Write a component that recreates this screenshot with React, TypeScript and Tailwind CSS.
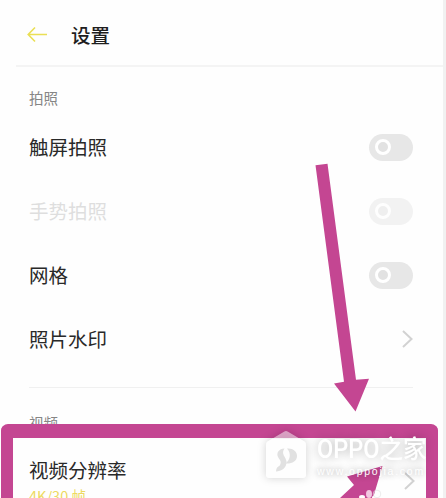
import React from 'react';
import clsx from 'clsx';

interface SettingRow {
  label: string;
  kind: 'toggle' | 'link';
  disabled?: boolean;
}

const photoSettings: SettingRow[] = [
  { label: '触屏拍照', kind: 'toggle' },
  { label: '手势拍照', kind: 'toggle', disabled: true },
  { label: '网格', kind: 'toggle' },
  { label: '照片水印', kind: 'link' },
];

const BackIcon = () => (
  <svg width="21" height="17" viewBox="0 0 21 17" fill="none" stroke="#eadf55" strokeWidth="1.6">
    <path d="M8 1.5 L1.2 8.5 L8 15.5 M1.2 8.5 H20" />
  </svg>
);

const ChevronIcon = () => (
  <svg width="12" height="18" viewBox="0 0 12 18" fill="none" stroke="#d2d2d2" strokeWidth="2">
    <path d="M2 1 L10.5 9 L2 17" />
  </svg>
);

const Toggle: React.FC<{ disabled?: boolean }> = ({ disabled }) => (
  <div className={clsx('flex h-[27px] w-[44px] items-center rounded-full bg-[#e7e7e7] pl-[6px]', disabled && 'opacity-50')}>
    <div className="h-4 w-4 rounded-full border-[3px] border-white bg-[#e2e2e2]" />
  </div>
);

const Row: React.FC<{ row: SettingRow }> = ({ row }) => (
  <div className="flex h-16 items-center justify-between">
    <span className={clsx('text-[19.5px]', row.disabled ? 'text-[#dedede]' : 'text-[#292929]')}>{row.label}</span>
    {row.kind === 'toggle' ? <Toggle disabled={row.disabled} /> : <ChevronIcon />}
  </div>
);

const PointerArrow = () => (
  <svg className="absolute left-[310px] top-[160px]" width="64" height="256" viewBox="310 160 64 256">
    <polygon points="315.5,165.2 327.5,163.8 356,379.8 369,378.8 355.5,411.5 334,383.5 344,381.8" fill="#c44692" />
  </svg>
);

const CornerArrow = () => (
  <svg className="absolute left-[327px] top-[26px]" width="52" height="34" viewBox="339 464 52 34">
    <polygon points="382.5,466 347,476.5 354,485 340,498 373,498" fill="#c44692" />
    <g fill="#fff">
      <ellipse cx="369" cy="494" rx="3" ry="4" fill="#f2c8e1" />
      <ellipse cx="362" cy="497" rx="3" ry="2" />
      <ellipse cx="375" cy="497.5" rx="3" ry="2" />
    </g>
    <circle cx="377" cy="494" r="3.8" fill="none" stroke="#e4e4e4" strokeWidth="0.7" />
  </svg>
);

const Watermark = () => (
  <div className="absolute left-[262px] top-[428px] flex">
    <svg className="overflow-visible" width="48" height="54" viewBox="262 428 48 54">
      <path
        d="M284 431.7 Q286 430.5 288 431.7 L304.5 441.5 Q306 442.5 306 444.5 V475 Q306 478 303 478 H269 Q266 478 266 475 V444.5 Q266 442.5 267.5 441.5Z"
        fill="#fff"
        fillOpacity="0.5"
        className="drop-shadow-[0_0_4px_rgba(0,0,0,0.35)]"
      />
      <path d="M272.5 438.5 H299.5 L304.5 441.5 Q306 442.5 306 444.5 V475 Q306 478 303 478 H269 Q266 478 266 475 V444.5 Q266 442.5 267.5 441.5Z" fill="#fefefe" />
      <path d="M284.5 448.5 C279 448.5 276 453 278 457 C279.5 460 282 461 280 465 C279 467 276.5 466 276 471.5 C281 471.5 287 468 286.5 461.5 C286 457 280.5 454 284.5 448.5Z" fill="#e1e1e1" />
      <path d="M287 448.5 C293 448 297 451.5 297 456 C297 461 292 464 285.5 463.5 C291 459 291 453 287 448.5Z" fill="#e1e1e1" />
    </svg>
    <div className="flex flex-col pl-[7px] pt-2 text-white">
      <span className="origin-left scale-x-[0.98] scale-y-[1.06] whitespace-nowrap font-['Roboto','Noto_Sans_CJK_SC',sans-serif] text-[24px] font-medium leading-[28px] [text-shadow:0_0_10px_rgba(0,0,0,0.32)]">
        OPPO之家
      </span>
      <span className="whitespace-nowrap font-['Liberation_Sans',sans-serif] text-[10.5px] leading-[15px] tracking-[1.75px] [text-shadow:0_0_6px_rgba(0,0,0,0.45)]">
        www.oppojia.com
      </span>
    </div>
  </div>
);

const App: React.FC = () => {
  return (
    <div className="relative h-[498px] w-[446px] overflow-hidden border-r-[3px] border-[#f1f1f1] bg-[#fefefe] font-['Noto_Sans_CJK_SC',sans-serif]">
      <header className="ml-4 flex h-[67px] items-center gap-[23px] border-b-2 border-[#f4f4f4] pl-[11px] pt-1">
        <BackIcon />
        <h1 className="text-[19.5px] font-medium text-[#1e1e1e]">设置</h1>
      </header>

      <main className="pl-[29px] pr-[30px]">
        <h2 className="mt-[21px] text-[14.5px] leading-5 text-[#858585]">拍照</h2>
        <div className="mt-[7px]">
          {photoSettings.map(row => (
            <Row key={row.label} row={row} />
          ))}
        </div>
        <div className="mt-4 border-t border-[#f0f0f0]" />
        <h2 className="mt-[25px] text-[14.5px] leading-5 text-[#858585]">视频</h2>
      </main>

      {/* Highlighted video resolution entry */}
      <section className="absolute left-px top-[424px] h-[90px] w-[437px] rounded-[7px] border-x-[12px] border-t-[14px] border-[#c44692] bg-[#fefefe]">
        <div className="flex items-start justify-between pl-4 pr-[11px] pt-[18px]">
          <div>
            <p className="text-[19.5px] leading-7 text-[#292929]">视频分辨率</p>
            <p className="mt-1 text-[14.5px] leading-4 text-[#edda61]">4K/30 帧</p>
          </div>
          <div className="pt-4">
            <ChevronIcon />
          </div>
        </div>
        <div className="absolute -left-px top-0">
          <CornerArrow />
        </div>
      </section>

      <PointerArrow />
      <Watermark />
    </div>
  );
};

export default App;
